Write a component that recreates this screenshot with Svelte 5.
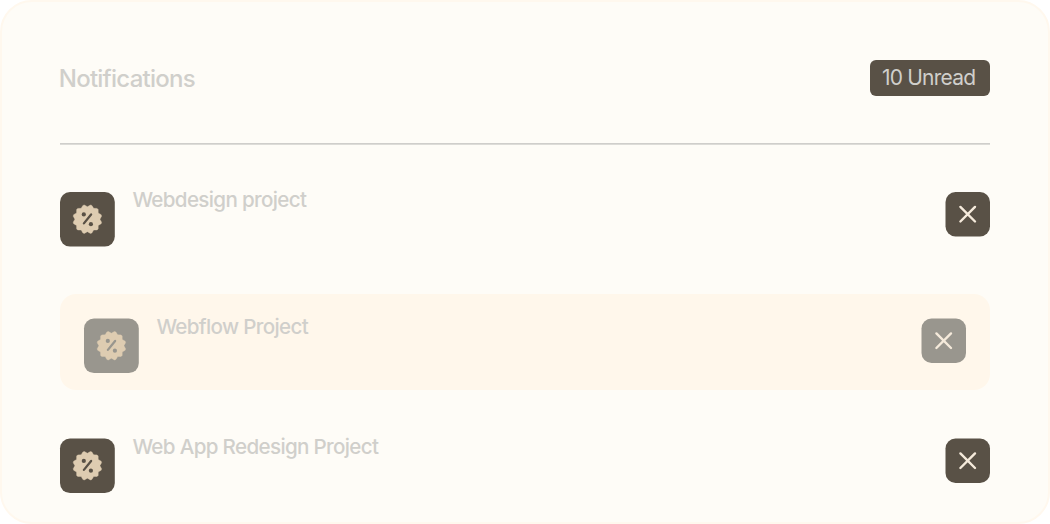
<script>
	const unread = 10;

	let notifications = $state([
		{ id: 1, title: 'Webdesign project', active: false },
		{ id: 2, title: 'Webflow Project', active: true },
		{ id: 3, title: 'Web App Redesign Project', active: false }
	]);

	const removeNotification = (id) => {
		notifications = notifications.filter((item) => item.id !== id);
	};

	// scalloped outline of the discount seal
	const sealPath = (lobes, outer, inner) => {
		const step = (Math.PI * 2) / lobes;
		const point = (radius, angle) =>
			`${(27.4 + radius * Math.sin(angle)).toFixed(2)} ${(27.2 - radius * Math.cos(angle)).toFixed(2)}`;
		let d = `M${point(inner, 0)}`;
		for (let i = 0; i < lobes; i++) {
			const a = i * step;
			d += `L${point(outer, a + step * 0.4)}L${point(outer, a + step * 0.6)}L${point(inner, a + step)}`;
		}
		return d + 'Z';
	};

	const seal = sealPath(12, 14.5, 12.5);
</script>

<section class="panel">
	<header>
		<h1>Notifications</h1>
		<span class="unread">{unread} Unread</span>
	</header>

	<ul>
		{#each notifications as item (item.id)}
			<li class:active={item.active}>
				<svg width="55" height="55" viewBox="0 0 55 55">
					<g>
						<rect class="tile" width="54.8" height="54.6" rx="10" />
						<path class="seal" d={seal} />
						<path class="slash" d="M31.1 22.5L23.9 31.4" />
						<circle class="dot" cx="23.8" cy="22.4" r="2.1" />
						<circle class="dot" cx="30.9" cy="32.2" r="2.1" />
					</g>
				</svg>
				<p>{item.title}</p>
				<button aria-label="Dismiss" onclick={() => removeNotification(item.id)}>
					<svg width="45" height="45" viewBox="0 0 45 45">
						<g>
							<rect class="tile" x="0.5" width="44.5" height="44.5" rx="10" />
							<path class="cross" d="M15.4 14.9L30 29.5M30 14.9L15.4 29.5" />
						</g>
					</svg>
				</button>
			</li>
		{/each}
	</ul>
</section>

<style>
	:global(body) {
		margin: 0;
		background: #fff;
	}

	.panel {
		box-sizing: border-box;
		width: 1050px;
		height: 524px;
		padding: 58px;
		overflow: hidden;
		border: 2px solid #fff8ee;
		border-radius: 32px;
		background: #fefcf7;
		font-family: Inter, sans-serif;
		color: #d0cfcb;
	}

	header {
		display: flex;
		justify-content: space-between;
		align-items: flex-start;
		height: 83px;
		border-bottom: 1px solid #cfcecb;
		box-shadow: 0 1px #dddcd8;
	}

	h1 {
		margin: 4px 0 0 -2px;
		padding-left: 0.8px;
		font-size: 24px;
		line-height: 29px;
		font-weight: 450;
		letter-spacing: -0.76px;
	}

	.unread {
		box-sizing: border-box;
		width: 120px;
		height: 36px;
		padding-left: 12px;
		border-radius: 6px;
		background: #595146;
		font-size: 21px;
		line-height: 36px;
		letter-spacing: -0.8px;
		white-space: nowrap;
	}

	ul {
		display: flex;
		flex-direction: column;
		gap: 47.4px;
		margin: 48px 0 0;
		padding: 0;
		list-style: none;
	}

	li {
		display: flex;
		align-items: flex-start;
	}

	.active {
		padding: 24px 24px 17px;
		border-radius: 16px;
		background: #fff7eb;
	}

	svg {
		display: block;
		flex: none;
		overflow: visible;
	}

	li:not(:first-child) g {
		transform: translateY(0.5px);
	}

	.tile,
	.dot {
		fill: #595146;
	}

	.seal {
		fill: #deccb1;
		stroke: #deccb1;
		stroke-width: 0.4;
		stroke-linejoin: round;
	}

	.slash {
		stroke: #595146;
		stroke-width: 2.3;
		stroke-linecap: round;
	}

	p {
		flex: 1;
		margin: -4px 0 0 17.4px;
		font-size: 20.6px;
		line-height: 25px;
		font-weight: 450;
		letter-spacing: -0.66px;
	}

	li:first-child p {
		margin-top: -4.6px;
	}

	button {
		padding: 0;
		border: none;
		background: none;
		cursor: pointer;
	}

	.cross {
		fill: none;
		stroke: #f5eadb;
		stroke-width: 2.4;
		stroke-linecap: round;
	}

	.active .tile,
	.active .dot {
		fill: #99968e;
	}

	.active .slash {
		stroke: #99968e;
	}
</style>
